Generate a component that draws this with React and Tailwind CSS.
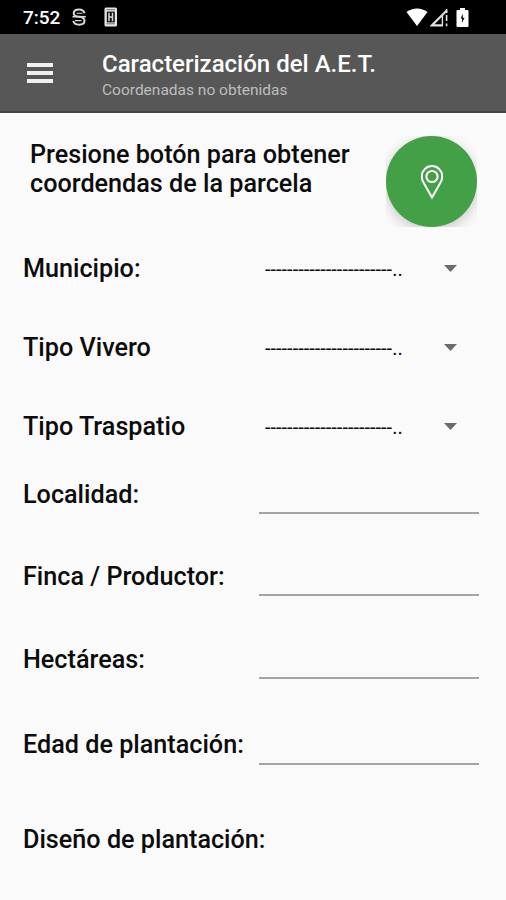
const SPINNERS = ["Municipio:", "Tipo Vivero", "Tipo Traspatio"];

const FIELDS = [
  { label: "Localidad:", height: "h-[49px]", gap: "pb-[4px]" },
  { label: "Finca / Productor:", height: "h-[82px]", gap: "pb-[4px]" },
  { label: "Hectáreas:", height: "h-[83px]", gap: "pb-[4px]" },
  { label: "Edad de plantación:", height: "h-[86px]", gap: "pb-[5px]" },
];

function StatusBar() {
  return (
    <div className="flex h-[34px] shrink-0 items-center bg-black pl-[23px] pr-[37px] text-white">
      <span className="w-[38px] whitespace-nowrap pt-px text-[19px] font-medium leading-[33px]">7:52</span>
      <svg className="ml-[10px] h-[20px] w-[16px]" viewBox="0 0 16 20" fill="none" stroke="#d8d8d8" strokeWidth="2">
        <path d="M13.5 6.2C13 3.8 11 2.4 8 2.4C4.7 2.4 2.7 4 2.7 6.3C2.7 8.5 4.5 9.5 8 9.7C11.7 10 13.5 11.5 13.5 13.8C13.5 16.3 11.3 17.7 8 17.7C4.8 17.7 2.8 16.4 2.3 13.9" />
        <path d="M1.5 9.7H14.8" strokeWidth="1.6" />
        <path d="M5.5 6.2H11.5M4 13.6H10.5" strokeWidth="1.1" />
      </svg>
      <svg className="ml-[17px] h-[20px] w-[14px]" viewBox="0 0 14 20">
        <rect x="0.5" y="0.5" width="12.5" height="19" rx="1.5" fill="#e6e6e6" />
        <path d="M2.5 2.7h8.5M2.5 16.8h8.5" stroke="#666" strokeWidth="0.9" />
        <rect x="2.8" y="4.6" width="8" height="10.8" fill="#111" />
        <path d="M5 5.8v8.4M8.5 5.8v8.4M5 10h3.5" stroke="#d8d8d8" strokeWidth="1.5" />
      </svg>
      <div className="ml-auto flex items-center">
        <svg className="h-[18px] w-[22px]" viewBox="0 0 22 18" fill="#fff">
          <path d="M0.5 4C6.5 -0.8 15.5 -0.8 21.5 4L11 18Z" />
        </svg>
        <svg className="ml-[2px] h-[19px] w-[18px]" viewBox="0 0 18 19" fill="none" stroke="#e0e0e0">
          <path d="M16.8 2.5L2 17.3H13" strokeWidth="2.2" />
          <path d="M12.4 7v10" strokeWidth="1.4" />
          <path d="M16.6 1v4M16.6 7v6M16.6 15.4v2.8" strokeWidth="1.6" />
        </svg>
        <svg className="ml-[8px] h-[19px] w-[13px]" viewBox="0 0 13 19">
          <path d="M4 0h5v2h2.5q1 0 1 1v15q0 1-1 1h-10q-1 0-1-1V3q0-1 1-1H4z" fill="#fff" />
          <path d="M6.8 5.8L4.6 10.6H6V14.8L8.6 9.8H6.8z" fill="#111" />
        </svg>
      </div>
    </div>
  );
}

function Toolbar() {
  return (
    <header className="flex h-[79px] shrink-0 items-start border-b-2 border-[#434343] bg-[#575757] pl-[27px]">
      <button className="mt-[29px] flex h-[20px] w-[26px] flex-col justify-between" aria-label="Menú">
        <span className="h-[4px] w-full bg-[#f0f0f0]" />
        <span className="h-[4px] w-full bg-[#f0f0f0]" />
        <span className="h-[4px] w-full bg-[#f0f0f0]" />
      </button>
      <div className="ml-[49px] flex flex-col pt-[15px]">
        <h1 className="whitespace-nowrap text-[24px] font-medium leading-[30px] text-white">Caracterización del A.E.T.</h1>
        <p className="whitespace-nowrap text-[15.5px] leading-[23px] text-[#bdbdbd]">Coordenadas no obtenidas</p>
      </div>
    </header>
  );
}

function Label({ children }) {
  return <span className="whitespace-nowrap text-[25.2px] font-medium leading-[30px]">{children}</span>;
}

export default function App() {
  return (
    <div className="flex h-[900px] w-[506px] flex-col overflow-hidden bg-[#fafafa] font-[Roboto,sans-serif] text-[#0c0c0c]">
      <StatusBar />
      <Toolbar />
      <main className="flex flex-col pl-[23px] pr-[27px]">
        <section className="flex h-[115px] items-start justify-between pl-[7px] pr-[2px]">
          <p className="whitespace-nowrap pt-[27px] text-[25.2px] font-medium leading-[29px]">
            Presione botón para obtener
            <br />
            coordendas de la parcela
          </p>
          <div className="mt-[23px] overflow-hidden">
            <button
              className="flex size-[91px] items-center justify-center rounded-full bg-[#43a047] shadow-[0_4px_14px_rgba(0,0,0,0.2)]"
              aria-label="Obtener coordenadas"
            >
              <svg className="h-[36px] w-[26px]" viewBox="0 0 26 36" fill="none" stroke="#fff" strokeWidth="2">
                <path d="M13 33.5L4.2 18C3.2 16.2 2.8 14.4 2.8 12.3A10.2 10.2 0 0 1 23.2 12.3C23.2 14.4 22.8 16.2 21.8 18Z" />
                <circle cx="13" cy="12.5" r="5.6" />
              </svg>
            </button>
          </div>
        </section>

        {SPINNERS.map((label) => (
          <div key={label} className="flex h-[79px] items-center">
            <div className="w-[242px] pt-[2px]">
              <Label>{label}</Label>
            </div>
            <span className="w-[179px] whitespace-nowrap pt-[2px] text-[20px] leading-[24px]">-----------------------..</span>
            <svg className="mt-[2px] h-[7px] w-[13px]" viewBox="0 0 13 7" fill="#6b6b6b">
              <path d="M0 0h13L6.5 7z" />
            </svg>
          </div>
        ))}

        {FIELDS.map(({ label, height, gap }) => (
          <div key={label} className={"flex items-end justify-between " + height}>
            <div className={gap}>
              <Label>{label}</Label>
            </div>
            <div className="h-[2px] w-[220px] bg-[#a4a4a4]" />
          </div>
        ))}

        <div className="flex h-[90px] items-end">
          <Label>Diseño de plantación:</Label>
        </div>
      </main>
    </div>
  );
}
